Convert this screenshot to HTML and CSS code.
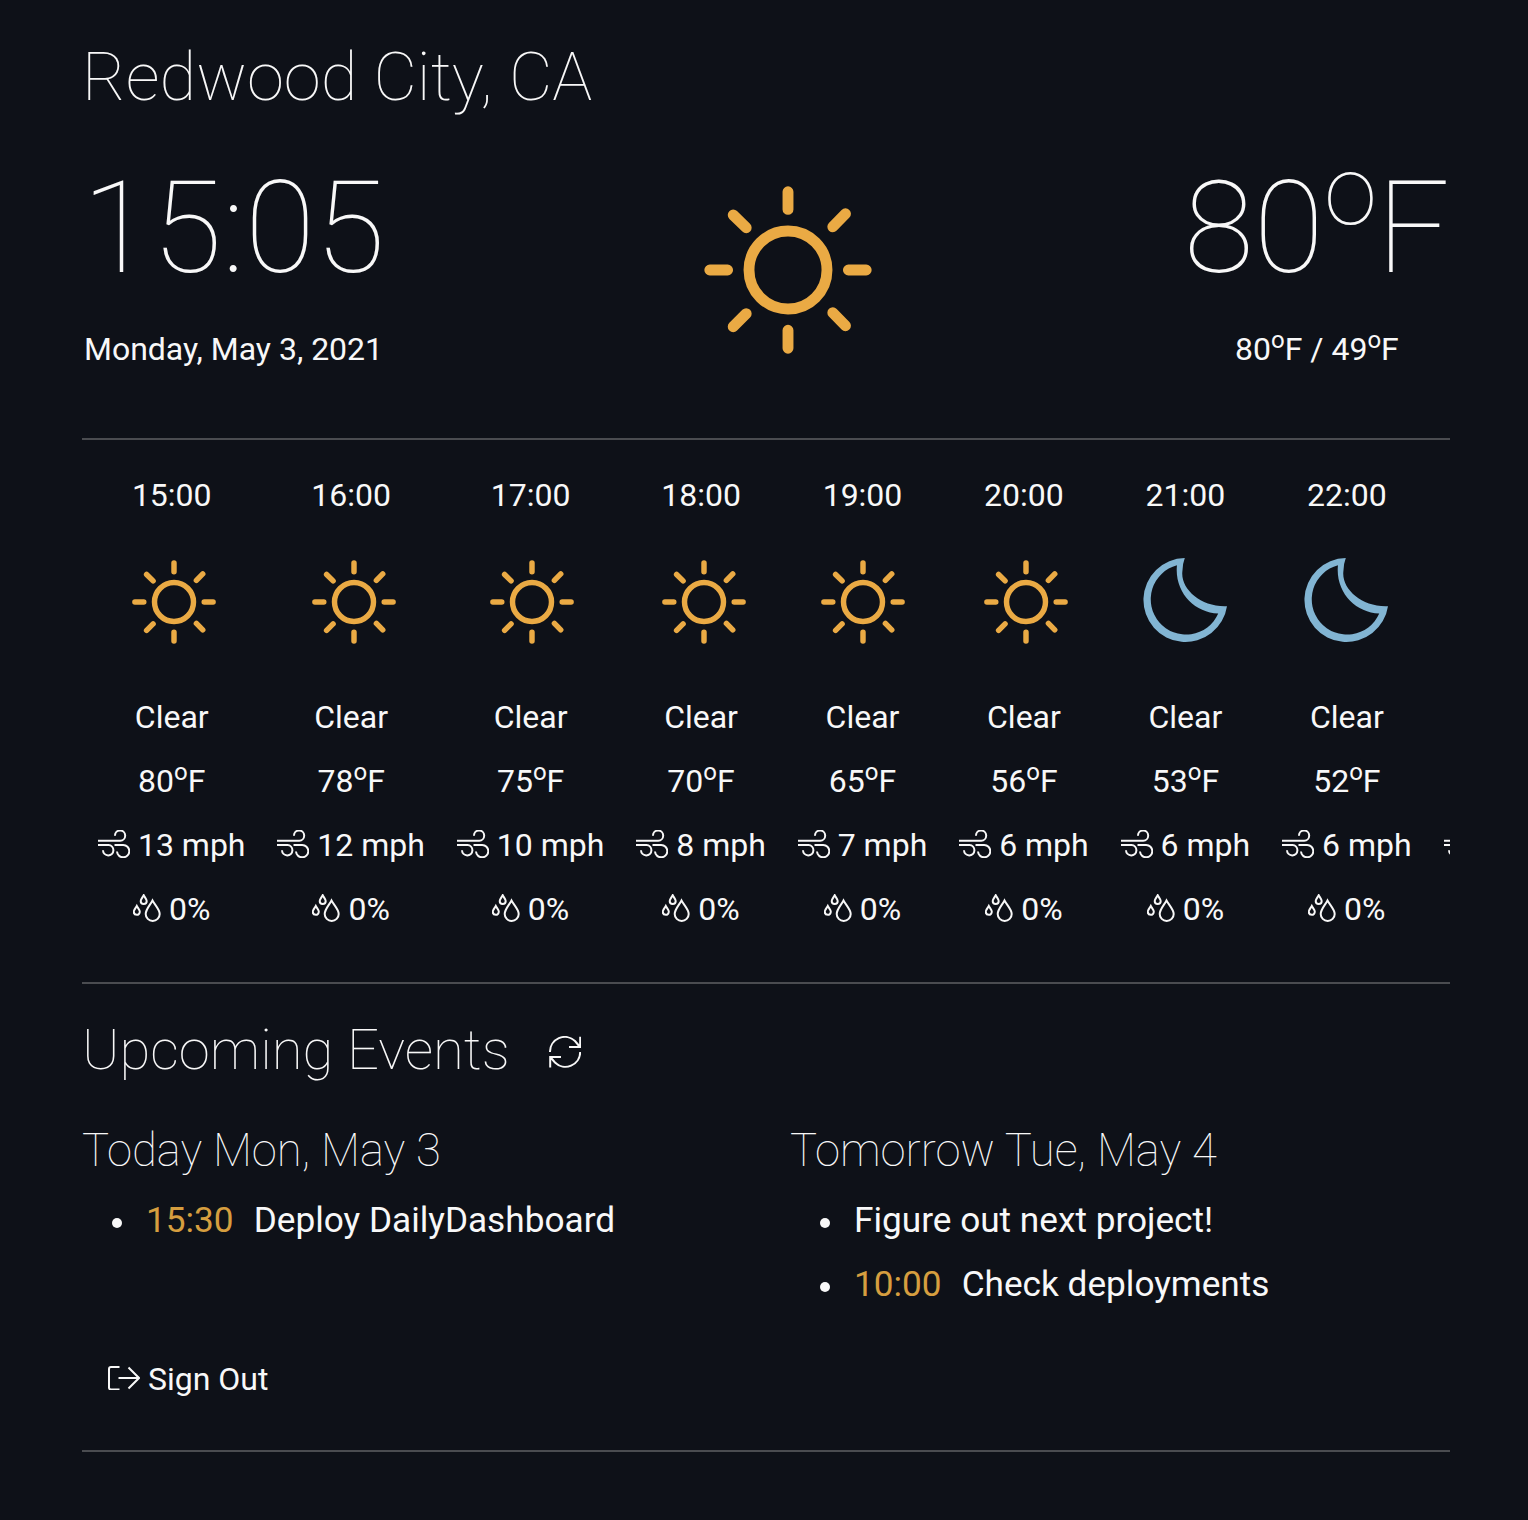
FILE: index.html
```html
<!DOCTYPE html>
<html lang="en">
<head>
<meta charset="utf-8">
<title>Daily Dashboard</title>
<link rel="stylesheet" href="styles.css">
</head>
<body>
<svg class="defs" aria-hidden="true">
  <symbol id="sun" viewBox="-84 -84 168 168">
    <g fill="none" stroke="currentColor" stroke-width="10.9" stroke-linecap="round">
      <circle r="39"/>
      <path d="M0-78.2V-60.6M0 78.2V60.3M-78.2 0H-60.4M78.2 0H60.4M57.5-56.2L44.8-43.2M-54.8-55L-41.8-42.3M-41.8 43.7L-54.8 56.7M44.8 42.7L57.5 55.7"/>
    </g>
  </symbol>
  <symbol id="moon" viewBox="0 0 83.4 83.4">
    <path fill="currentColor" fill-rule="evenodd" d="M41.5 0A41.7 41.7 0 1 0 83.4 47.8C57 49 36.5 30 39.2 12.500Q39.500 5 41.500 0ZM33.700 7.200A35 35 0 1 0 74.700 55.200C51 54.500 31 34 33.700 7.200Z"/>
  </symbol>
  <symbol id="wind" viewBox="0 0 32 28">
    <path class="line" d="M0 10.700H22.200A5.100 5.100 0 1 0 17 5.700M0 15H10.500A5.200 5.200 0 1 1 5 20.300M16.500 15H25.200A6.150 6.150 0 1 1 19 21.500"/>
  </symbol>
  <symbol id="drops" viewBox="0 0 28 28">
    <path class="line" d="M19.500 6.500C17.500 10.500 12.700 15.500 12.700 19.900A6.900 6.900 0 0 0 26.700 19.900C26.700 15.500 21.500 10.500 19.500 6.500ZM10.700 1.200C9.800 3 7.700 5.200 7.700 7.100A3 3 0 0 0 13.700 7.100C13.700 5.200 11.600 3 10.700 1.200ZM3.800 12C2.900 13.800 .8 15.900 .8 17.800A3 3 0 0 0 6.800 17.800C6.800 15.900 4.700 13.800 3.800 12Z"/>
  </symbol>
</svg>
<main class="dashboard">
  <h1 class="city">Redwood City, CA</h1>
  <section class="now">
    <div class="now-block">
      <div class="big">15:05</div>
      <div class="sub">Monday, May 3, 2021</div>
    </div>
    <svg class="now-icon sun"><use href="#sun"/></svg>
    <div class="now-block">
      <div class="big">80<sup>o</sup>F</div>
      <div class="sub">80<sup>o</sup>F / 49<sup>o</sup>F</div>
    </div>
  </section>
  <section class="hours">
    <div class="hour"><p>15:00</p><svg class="sky sun"><use href="#sun"/></svg><p>Clear</p><p>80<sup>o</sup>F</p><p><svg class="wind"><use href="#wind"/></svg> 13 mph</p><p><svg class="drops"><use href="#drops"/></svg> 0%</p></div>
    <div class="hour"><p>16:00</p><svg class="sky sun"><use href="#sun"/></svg><p>Clear</p><p>78<sup>o</sup>F</p><p><svg class="wind"><use href="#wind"/></svg> 12 mph</p><p><svg class="drops"><use href="#drops"/></svg> 0%</p></div>
    <div class="hour"><p>17:00</p><svg class="sky sun"><use href="#sun"/></svg><p>Clear</p><p>75<sup>o</sup>F</p><p><svg class="wind"><use href="#wind"/></svg> 10 mph</p><p><svg class="drops"><use href="#drops"/></svg> 0%</p></div>
    <div class="hour"><p>18:00</p><svg class="sky sun"><use href="#sun"/></svg><p>Clear</p><p>70<sup>o</sup>F</p><p><svg class="wind"><use href="#wind"/></svg> 8 mph</p><p><svg class="drops"><use href="#drops"/></svg> 0%</p></div>
    <div class="hour"><p>19:00</p><svg class="sky sun"><use href="#sun"/></svg><p>Clear</p><p>65<sup>o</sup>F</p><p><svg class="wind"><use href="#wind"/></svg> 7 mph</p><p><svg class="drops"><use href="#drops"/></svg> 0%</p></div>
    <div class="hour"><p>20:00</p><svg class="sky sun"><use href="#sun"/></svg><p>Clear</p><p>56<sup>o</sup>F</p><p><svg class="wind"><use href="#wind"/></svg> 6 mph</p><p><svg class="drops"><use href="#drops"/></svg> 0%</p></div>
    <div class="hour"><p>21:00</p><svg class="sky moon"><use href="#moon"/></svg><p>Clear</p><p>53<sup>o</sup>F</p><p><svg class="wind"><use href="#wind"/></svg> 6 mph</p><p><svg class="drops"><use href="#drops"/></svg> 0%</p></div>
    <div class="hour"><p>22:00</p><svg class="sky moon"><use href="#moon"/></svg><p>Clear</p><p>52<sup>o</sup>F</p><p><svg class="wind"><use href="#wind"/></svg> 6 mph</p><p><svg class="drops"><use href="#drops"/></svg> 0%</p></div>
    <div class="hour"><p>23:00</p><svg class="sky moon"><use href="#moon"/></svg><p>Clear</p><p>51<sup>o</sup>F</p><p><svg class="wind"><use href="#wind"/></svg> 6 mph</p><p><svg class="drops"><use href="#drops"/></svg> 0%</p></div>
  </section>
  <section class="events">
    <h2 class="events-title"><span class="events-name">Upcoming Events</span>
      <svg class="refresh" viewBox="0 0 32 32"><path class="line" d="M1 16A14.800 14.800 0 0 1 26 5L31 11M31.200 .8V11H20M31.200 16A14.800 14.800 0 0 1 6 26.500L1.200 21M1.200 31.500V21H12"/></svg>
    </h2>
    <div class="days">
      <div>
        <h3 class="day-title">Today Mon, May 3</h3>
        <ul class="list"><li><span class="time">15:30</span>Deploy DailyDashboard</li></ul>
      </div>
      <div>
        <h3 class="day-title">Tomorrow Tue, May 4</h3>
        <ul class="list"><li>Figure out next project!</li><li><span class="time">10:00</span>Check deployments</li></ul>
      </div>
    </div>
    <div class="signout"><svg class="exit" viewBox="0 0 32 24"><path class="line" d="M11.500 1H3Q1 1 1 3V21.500Q1 23.500 3 23.500H11.500M10.500 12H31M20.500 1.500L31 12L20.500 22.500"/></svg> Sign Out</div>
  </section>
</main>
</body>
</html>
```
FILE: styles.css
```css
* { box-sizing: border-box; }
body {
  margin: 0;
  min-height: 1520px;
  background: #0e1118;
  color: #f8f8f8;
  font: 400 32px/48px Roboto, sans-serif;
}
h1, h2, h3, p, ul { margin: 0; padding: 0; font-weight: 100; }
p, ul { font-weight: 400; }
sup { position: relative; top: -.5em; font-size: 75%; line-height: 0; vertical-align: baseline; }
.defs { display: block; width: 0; height: 0; }
.line { fill: none; stroke: currentColor; stroke-width: 2; stroke-linecap: butt; }
.dashboard { width: 1368px; margin-left: 82px; padding-top: 36px; }
.city { font-size: 67px; line-height: 82px; }
.now { display: flex; justify-content: space-between; padding: 33px 0 65px; }
.now-block { text-align: center; }
.big { font-size: 128px; line-height: 154px; font-weight: 100; }
.sub { margin-top: 20px; }
.now-icon { width: 168px; height: 168px; margin: 34.500px 0 0 7px; }
.sun { color: #eaaa44; }
.moon { color: #82b5d3; }
.hours {
  display: flex;
  height: 546px;
  padding-top: 31px;
  overflow: hidden;
  border: solid #4a4c50;
  border-width: 2px 0;
}
.hour { flex: none; padding: 0 15.970px; text-align: center; white-space: nowrap; }
.hour p { margin-bottom: 16px; }
.sky { display: block; width: 84px; height: 84px; margin: 41px auto 49px; overflow: visible; }
.hour .sun { translate: 2px 0; }
.hour:nth-child(3) .sun, .hour:nth-child(5) .sun { translate: 1px 0; }
.hour:nth-child(2) .sun, .hour:nth-child(4) .sun { translate: 3px 0; }
.hour .moon { translate: 0 -2px; }
.hour:nth-child(8) .moon { translate: -1px -2px; }
.wind { width: 32px; height: 28px; vertical-align: -2px; }
.drops { width: 28px; height: 28px; vertical-align: -2px; }
.events { height: 468px; padding-top: 32px; border-bottom: 2px solid #4a4c50; }
.events-title { display: flex; align-items: center; font-size: 56.250px; line-height: 68px; }
.events-name { width: 467px; }
.refresh { width: 32px; height: 32px; margin-top: 4px; }
.days { display: grid; grid-template-columns: 708px 1fr; margin-top: 40px; }
.day-title { font-size: 45.400px; line-height: 54px; }
.list { margin-top: 10px; padding-left: 64px; font-size: 35.200px; line-height: 64px; list-style: none; }
.list li::before {
  content: "";
  display: inline-block;
  width: 10px;
  height: 10px;
  margin: 0 24px 0 -34px;
  border-radius: 50%;
  background: currentColor;
  vertical-align: 4.500px;
}
.time { margin-right: 20px; color: #d69e3f; }
.signout { margin-top: 39px; padding-left: 26px; }
.exit { width: 32px; height: 24px; vertical-align: 0; }
```
